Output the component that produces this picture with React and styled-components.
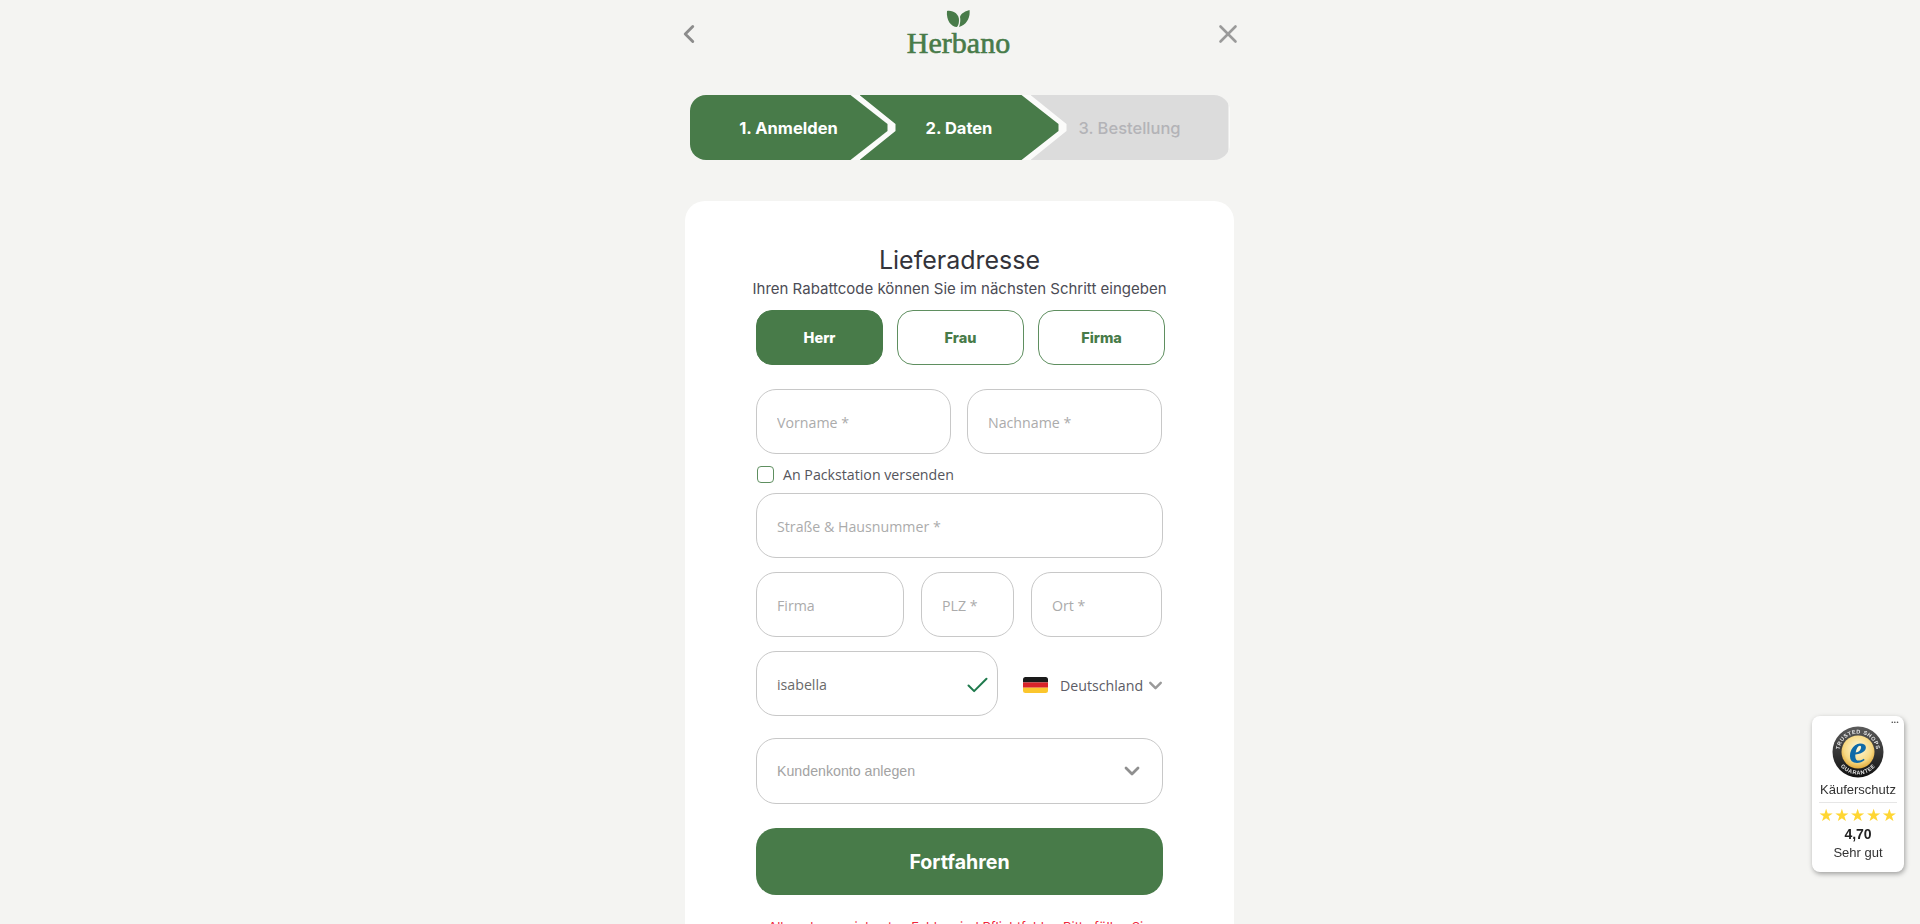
import React from "react";
import styled, { createGlobalStyle } from "styled-components";
import { ChevronLeft, ChevronDown, X, Check } from "lucide-react";

const green = "#487b49";

const GlobalStyle = createGlobalStyle`
  html, body {
    margin: 0;
    height: 924px;
    overflow: hidden;
    background: #f4f4f2;
    font-family: "Inter", sans-serif;
  }
  * { box-sizing: border-box; }
`;

const steps = [
  { label: "1. Anmelden", done: true, width: 198, notch: 0 },
  { label: "2. Daten", done: true, width: 199, notch: 36 },
  { label: "3. Bestellung", done: false, width: 198, notch: 36 },
];

const App = () => {
  return (
    <>
      <GlobalStyle />
      <Page>
        <Header>
          <IconButton>
            <ChevronLeft size={30} strokeWidth={2.3} />
          </IconButton>
          <Logo>
            <svg width="24" height="18" viewBox="0 0 24 18">
              <path d="M1 1C7 0 13 4 13 10c0 3-.5 5-2 7C5 17 0 10 1 1Z" fill={green} />
              <path d="M23.500 0c1 7-2.500 15-10.500 17 1.500-4 1.500-8 1-10 1-4 6-6 9.500-7Z" fill={green} />
            </svg>
            <LogoText>Herbano</LogoText>
          </Logo>
          <IconButton $light>
            <X size={30} strokeWidth={2.1} />
          </IconButton>
        </Header>

        <Steps>
          {steps.map((s) => (
            <Step key={s.label} $done={s.done} $width={s.width} $notch={s.notch}>
              {s.label}
            </Step>
          ))}
        </Steps>

        <Card>
          <Title>Lieferadresse</Title>
          <Subtitle>Ihren Rabattcode können Sie im nächsten Schritt eingeben</Subtitle>

          <Salutation>
            <SalutationButton $active>Herr</SalutationButton>
            <SalutationButton>Frau</SalutationButton>
            <SalutationButton>Firma</SalutationButton>
          </Salutation>

          <NameRow>
            <Input placeholder="Vorname *" />
            <Input placeholder="Nachname *" />
          </NameRow>

          <CheckRow>
            <CheckBox type="checkbox" />
            An Packstation versenden
          </CheckRow>

          <Input placeholder="Straße & Hausnummer *" />

          <AddressRow>
            <Input placeholder="Firma" />
            <Input placeholder="PLZ *" />
            <Input placeholder="Ort *" />
          </AddressRow>

          <CityRow>
            <InputWrap>
              <Input defaultValue="isabella" />
              <ValidMark>
                <Check size={27} strokeWidth={1.8} />
              </ValidMark>
            </InputWrap>
            <Country>
              <svg width="25" height="16" viewBox="0 0 25 16">
                <defs>
                  <clipPath id="flag">
                    <rect width="25" height="16" rx="2.500" />
                  </clipPath>
                </defs>
                <g clipPath="url(#flag)">
                  <rect width="25" height="5.400" fill="#1a1a1a" />
                  <rect y="5.400" width="25" height="5.300" fill="#d8232a" />
                  <rect y="10.700" width="25" height="5.300" fill="#fbc62d" />
                </g>
              </svg>
              <CountryName>Deutschland</CountryName>
              <ChevronDown size={21} strokeWidth={2.8} color="#9a9a9a" />
            </Country>
          </CityRow>

          <AccountSelect>
            Kundenkonto anlegen
            <ChevronDown size={24} strokeWidth={2.8} color="#8f8f8f" />
          </AccountSelect>

          <SubmitButton>Fortfahren</SubmitButton>

          <RequiredNote>
            Alle gekennzeichneten Felder sind Pflichtfelder. Bitte füllen Sie
            <br />
            diese aus.
          </RequiredNote>
        </Card>
      </Page>

      <TrustBadge>
        <BadgeDots>•••</BadgeDots>
        <svg width="52" height="52" viewBox="0 0 52 52">
          <defs>
            <radialGradient id="seal" cx="50%" cy="40%" r="60%">
              <stop offset="0%" stopColor="#fff8dc" />
              <stop offset="70%" stopColor="#f7d983" />
              <stop offset="100%" stopColor="#e2ab3c" />
            </radialGradient>
            <linearGradient id="ring" x1="0" y1="0" x2="0" y2="1">
              <stop offset="0%" stopColor="#5b5b5b" />
              <stop offset="100%" stopColor="#111" />
            </linearGradient>
            <path id="topArc" d="M26 44.500a18.500 18.500 0 1 1 0-37a18.500 18.500 0 1 1 0 37" />
            <path id="botArc" d="M26 3.500a22.500 22.500 0 1 0 0 45a22.500 22.500 0 1 0 0-45" />
          </defs>
          <circle cx="26" cy="26" r="25.500" fill="url(#ring)" />
          <circle cx="26" cy="26" r="16.500" fill="url(#seal)" />
          <SealText>
            <textPath href="#topArc" startOffset="50%" textAnchor="middle">TRUSTED SHOPS</textPath>
          </SealText>
          <SealText>
            <textPath href="#botArc" startOffset="50%" textAnchor="middle">GUARANTEE</textPath>
          </SealText>
          <SealLetter x="26" y="37">e</SealLetter>
        </svg>
        <BadgeLabel>Käuferschutz</BadgeLabel>
        <BadgeDivider />
        <BadgeStars>★★★★★</BadgeStars>
        <BadgeScore>4,70</BadgeScore>
        <BadgeLabel $tight>Sehr gut</BadgeLabel>
      </TrustBadge>
    </>
  );
};

const Page = styled.div`
  width: 549px;
  margin-left: 685px;
`;

const Header = styled.header`
  height: 95px;
  margin: 0 -9px 0 -11px;
  display: flex;
  justify-content: space-between;
  align-items: flex-start;
`;

const IconButton = styled.div`
  width: 30px;
  height: 30px;
  margin-top: 19px;
  color: ${(p) => (p.$light ? "#9a9a9a" : "#8c8c8c")};
`;

const Logo = styled.div`
  padding-top: 10px;
  display: flex;
  flex-direction: column;
  align-items: center;
`;

const LogoText = styled.div`
  font-family: "Liberation Serif", serif;
  font-size: 30px;
  line-height: 30px;
  color: ${green};
  -webkit-text-stroke: 0.6px ${green};
`;

const Steps = styled.div`
  width: 540px;
  height: 65px;
  margin: 0 auto;
  display: flex;
  background: #fbfbfa;
  border-radius: 16px;
  overflow: hidden;
`;

const Step = styled.div`
  flex: none;
  width: ${(p) => p.$width}px;
  margin-left: ${(p) => (p.$notch ? -28 : 0)}px;
  display: flex;
  align-items: center;
  justify-content: center;
  background: ${(p) => (p.$done ? green : "#dcdcdc")};
  color: ${(p) => (p.$done ? "#fff" : "#b3b3b7")};
  font-size: 16.500px;
  font-weight: ${(p) => (p.$done ? 700 : 500)};
  clip-path: ${(p) =>
    p.$done
      ? `polygon(0 0, ${p.$width - 37}px 0, ${p.$width}px 29px, ${p.$width}px 36px, ${p.$width - 37}px 65px, 0 65px, ${p.$notch}px 36px, ${p.$notch}px 29px)`
      : `polygon(0 0, 100% 0, 100% 100%, 0 100%, ${p.$notch}px 36px, ${p.$notch}px 29px)`};
`;

const Card = styled.main`
  margin-top: 41px;
  padding: 44px 71px 40px;
  background: #fff;
  border-radius: 20px;
  display: flex;
  flex-direction: column;
`;

const Title = styled.h1`
  margin: 0;
  font-size: 25px;
  line-height: 30px;
  font-weight: 400;
  color: #33333a;
  text-align: center;
`;

const Subtitle = styled.p`
  margin: 4px -10px 11px;
  font-size: 15px;
  line-height: 20px;
  color: #4c4c55;
  text-align: center;
  white-space: nowrap;
`;

const Salutation = styled.div`
  width: 409px;
  display: grid;
  grid-template-columns: repeat(3, 1fr);
  gap: 14px;
  margin-bottom: 24px;
`;

const SalutationButton = styled.button`
  height: 55px;
  border: 1.5px solid ${(p) => (p.$active ? green : "#5f8f60")};
  border-radius: 16px;
  background: ${(p) => (p.$active ? green : "#fff")};
  color: ${(p) => (p.$active ? "#fff" : green)};
  font-family: "Inter", sans-serif;
  font-size: 14.500px;
  font-weight: 800;
`;

const Input = styled.input`
  width: 100%;
  height: 65px;
  padding: 1px 20px 0;
  border: 1px solid #c8c8c8;
  border-radius: 20px;
  background: #fff;
  outline: none;
  font-family: "Open Sans", sans-serif;
  font-size: 14.200px;
  color: #6a6a6a;
  &::placeholder {
    color: #ababab;
    opacity: 1;
  }
`;

const NameRow = styled.div`
  display: grid;
  grid-template-columns: 195px 195px;
  column-gap: 16px;
`;

const CheckRow = styled.label`
  height: 39px;
  padding: 2px 0 0 1px;
  display: flex;
  align-items: center;
  gap: 9px;
  font-family: "Open Sans", sans-serif;
  font-size: 14.200px;
  color: #55555c;
`;

const CheckBox = styled.input`
  appearance: none;
  width: 17px;
  height: 17px;
  margin: 0;
  border: 1.5px solid #5f8f60;
  border-radius: 4px;
  background: #fff;
`;

const AddressRow = styled.div`
  margin-top: 14px;
  display: grid;
  grid-template-columns: 148px 93px 131px;
  column-gap: 17px;
`;

const CityRow = styled.div`
  margin-top: 14px;
  display: flex;
  align-items: center;
`;

const InputWrap = styled.div`
  position: relative;
  flex: none;
  width: 242px;
`;

const ValidMark = styled.span`
  position: absolute;
  right: 7px;
  top: 21px;
  color: #1f7a4d;
`;

const Country = styled.div`
  flex: none;
  margin: 3px 0 0 25px;
  display: flex;
  align-items: center;
  svg:first-child {
    flex: none;
  }
`;

const CountryName = styled.span`
  margin: 0 2px 0 12px;
  font-family: "Open Sans", sans-serif;
  font-size: 14.200px;
  color: #5c5c66;
`;

const AccountSelect = styled.div`
  margin-top: 22px;
  height: 66px;
  padding: 0 18px 0 20px;
  display: flex;
  align-items: center;
  justify-content: space-between;
  border: 1.5px solid #c8c8c8;
  border-radius: 20px;
  font-family: "Liberation Sans", sans-serif;
  font-size: 14.200px;
  color: #a3a3a3;
`;

const SubmitButton = styled.button`
  margin-top: 24px;
  height: 67px;
  border: none;
  border-radius: 20px;
  background: ${green};
  color: #fff;
  font-family: "Inter", sans-serif;
  font-size: 19.600px;
  font-weight: 700;
`;

const RequiredNote = styled.p`
  margin: 22px -20px 0;
  font-size: 13px;
  line-height: 20px;
  color: #f0263c;
  text-align: center;
`;

const TrustBadge = styled.aside`
  position: fixed;
  left: 1812px;
  top: 716px;
  width: 92px;
  height: 156px;
  padding-top: 10px;
  background: #fff;
  border-radius: 8px;
  box-shadow: 1px 2px 5px rgba(0, 0, 0, 0.35);
  display: flex;
  flex-direction: column;
  align-items: center;
  font-family: "Liberation Sans", sans-serif;
  color: #333;
`;

const BadgeDots = styled.span`
  position: absolute;
  top: 2px;
  right: 5px;
  font-size: 6px;
  line-height: 8px;
  letter-spacing: 0.5px;
  color: #555;
`;

const SealText = styled.text`
  font-family: "Liberation Sans", sans-serif;
  font-size: 5.500px;
  font-weight: 700;
  letter-spacing: 0.5px;
  fill: #e8e8e8;
`;

const SealLetter = styled.text`
  font-family: "Liberation Serif", serif;
  font-size: 40px;
  font-style: italic;
  font-weight: 700;
  fill: #0f6aa8;
  text-anchor: middle;
`;

const BadgeLabel = styled.div`
  font-size: 13px;
  line-height: 16px;
  margin-top: ${(p) => (p.$tight ? 3 : 4)}px;
  white-space: nowrap;
`;

const BadgeDivider = styled.div`
  width: 78px;
  height: 1px;
  margin-top: 4px;
  background: #e6e6e6;
`;

const BadgeStars = styled.div`
  margin-top: 2px;
  font-family: "DejaVu Sans", sans-serif;
  font-size: 17px;
  line-height: 21px;
  letter-spacing: 0.6px;
  color: #ffd633;
  white-space: nowrap;
`;

const BadgeScore = styled.div`
  font-size: 14px;
  line-height: 16px;
  font-weight: 700;
  color: #222;
`;

export default App;
